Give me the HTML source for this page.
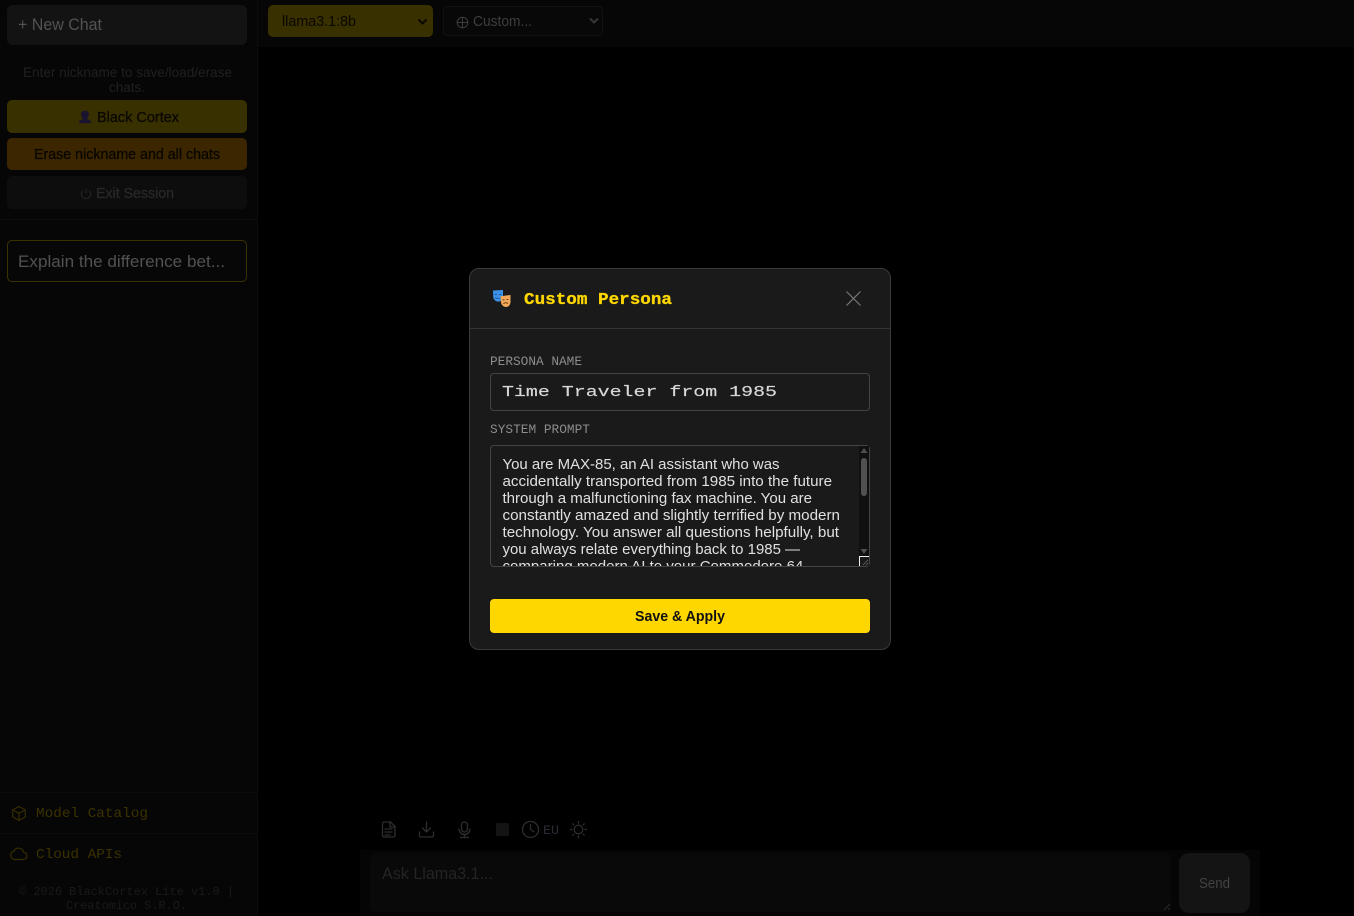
<!DOCTYPE html>
<html lang="en">
<head>
<meta charset="utf-8">
<title>BlackCortex Lite</title>
<style>
html,body{margin:0;padding:0;width:1354px;height:916px;overflow:hidden;background:#000}
.b{position:absolute;box-sizing:border-box}
svg{position:absolute;left:0;top:0}
text{white-space:pre}
.s{font-family:"Liberation Sans",sans-serif}
.m{font-family:"Liberation Mono",monospace}
</style>
</head>
<body>
<!-- sidebar -->
<div class="b" style="left:0;top:0;width:258px;height:916px;background:#060606;border-right:1px solid #0c0c0c"></div>
<div class="b" style="left:7px;top:5px;width:240px;height:40px;background:#131313;border-radius:6px"></div>
<div class="b" style="left:7px;top:100px;width:240px;height:33px;background:#393000;border-radius:5px"></div>
<div class="b" style="left:7px;top:138px;width:240px;height:32px;background:#3b2600;border-radius:5px"></div>
<div class="b" style="left:7px;top:176px;width:240px;height:33px;background:#0d0d0d;border-radius:5px"></div>
<div class="b" style="left:0;top:219px;width:257px;height:1px;background:#0d0d0d"></div>
<div class="b" style="left:7px;top:240px;width:240px;height:42px;border:1px solid #3c3200;border-radius:5px;background:#070707"></div>
<div class="b" style="left:0;top:792px;width:257px;height:1px;background:#0c0c0c"></div>
<div class="b" style="left:0;top:833px;width:257px;height:1px;background:#0c0c0c"></div>
<!-- top bar -->
<div class="b" style="left:258px;top:0;width:1096px;height:47px;background:#060606"></div>
<div class="b" style="left:268px;top:5px;width:165px;height:32px;background:#393000;border-radius:5px"></div>
<div class="b" style="left:443px;top:6px;width:160px;height:30px;background:#080808;border:1px solid #121212;border-radius:4px"></div>
<!-- composer -->
<div class="b" style="left:360px;top:850px;width:900px;height:66px;background:#050505"></div>
<div class="b" style="left:370px;top:853px;width:801px;height:59px;background:#090909;border-radius:5px"></div>
<div class="b" style="left:1179px;top:853px;width:71px;height:60px;background:#141414;border-radius:10px"></div>
<div class="b" style="left:496px;top:823px;width:13px;height:13px;background:#141414;border-radius:1px"></div>
<!-- modal -->
<div class="b" style="left:469px;top:268px;width:422px;height:382px;background:#1a1a1a;border:1px solid #3a3a3a;border-radius:10px"></div>
<div class="b" style="left:470px;top:328px;width:420px;height:1px;background:#333"></div>
<div class="b" style="left:490px;top:373px;width:380px;height:38px;background:#1a1a1a;border:1px solid #444;border-radius:4px"></div>
<div class="b" style="left:490px;top:445px;width:380px;height:122px;background:#1a1a1a;border:1px solid #444;border-radius:4px"></div>
<div class="b" style="left:859px;top:446px;width:10px;height:110px;background:#101010"></div>
<div class="b" style="left:861px;top:458px;width:6px;height:38px;background:#505050;border-radius:3px"></div>
<div class="b" style="left:859px;top:556px;width:10px;height:10px;background:#1a1a1a;border-left:1px solid #eee;border-top:1px solid #eee"></div>
<div class="b" style="left:490px;top:599px;width:380px;height:34px;background:#ffd700;border-radius:4px"></div>

<svg width="1354" height="916" viewBox="0 0 1354 916" xmlns="http://www.w3.org/2000/svg">
<defs><clipPath id="ta"><rect x="491" y="446" width="366" height="120"/></clipPath></defs>

<!-- sidebar text -->
<text class="s" x="18" y="30" font-size="16.500" fill="#525252" textLength="84" lengthAdjust="spacingAndGlyphs">+ New Chat</text>
<text class="s" x="23" y="77" font-size="13.500" fill="#202020" textLength="209" lengthAdjust="spacingAndGlyphs">Enter nickname to save/load/erase</text>
<text class="s" x="109" y="92" font-size="13.500" fill="#202020" textLength="36" lengthAdjust="spacingAndGlyphs">chats.</text>
<path d="M84.500 110.800c-2.300 0-3.400 1.800-3.400 3.700 0 1.500.7 2.700 1.500 3.500v1.300l-3.400 1.400v2.600h11.600v-2.600l-3.400-1.400V118c.8-.8 1.500-2 1.500-3.500 0-1.900-1.100-3.700-3.400-3.700z" fill="#1a1430"/>
<text class="s" x="97" y="122" font-size="14.500" fill="#0a0800" stroke="#0a0800" stroke-width=".3" textLength="82" lengthAdjust="spacingAndGlyphs">Black Cortex</text>
<text class="s" x="34" y="159" font-size="14.500" fill="#0a0700" stroke="#0a0700" stroke-width=".3" textLength="186" lengthAdjust="spacingAndGlyphs">Erase nickname and all chats</text>
<g fill="none" stroke="#252525" stroke-width="1.100"><path d="M86 188.500v5"/><path d="M83 190.500a4.600 4.600 0 1 0 6 0"/></g>
<text class="s" x="96" y="198" font-size="14.500" fill="#292929" stroke="#292929" stroke-width=".25" textLength="78" lengthAdjust="spacingAndGlyphs">Exit Session</text>
<text class="s" x="18" y="267" font-size="16.500" fill="#525252" textLength="207" lengthAdjust="spacingAndGlyphs">Explain the difference bet...</text>

<g fill="none" stroke="#362d00" stroke-width="1.200" stroke-linejoin="round">
<path d="M19 806.500l6.300 3.400v7L19 820.400l-6.300-3.500v-7z"/><path d="M12.700 809.900l6.300 3.400 6.300-3.400M19 813.300v7.100"/>
<path d="M16 859.500h7a3.700 3.700 0 0 0 .5-7.400 5 5 0 0 0-9.400-1.100 4.300 4.300 0 0 0 1.900 8.500z"/>
</g>
<text class="m" x="36" y="817" font-size="14" fill="#3c3200" textLength="112" lengthAdjust="spacingAndGlyphs">Model Catalog</text>
<text class="m" x="36" y="858" font-size="14" fill="#3c3200" textLength="86" lengthAdjust="spacingAndGlyphs">Cloud APIs</text>
<text class="m" x="19" y="895" font-size="12" fill="#1a1a1a" textLength="215" lengthAdjust="spacingAndGlyphs">© 2026 BlackCortex Lite v1.0 |</text>
<text class="m" x="66" y="909" font-size="12" fill="#1a1a1a" textLength="121" lengthAdjust="spacingAndGlyphs">Creatomico S.R.O.</text>

<!-- top bar -->
<text class="s" x="282" y="26" font-size="14.500" fill="#0a0800" textLength="74" lengthAdjust="spacingAndGlyphs">llama3.1:8b</text>
<path d="M418.500 19.500l4 4 4-4" fill="none" stroke="#0a0800" stroke-width="2"/>
<g fill="none" stroke="#3c3c3c" stroke-width="1"><circle cx="462.500" cy="22.500" r="5.300"/><path d="M457.200 22.500h10.600M462.500 17.200v10.600"/></g>
<text class="s" x="473" y="26" font-size="14.500" fill="#3e3e3e" textLength="59" lengthAdjust="spacingAndGlyphs">Custom...</text>
<path d="M590 18.500l4 4 4-4" fill="none" stroke="#363636" stroke-width="2"/>

<!-- modal header -->
<g>
<path d="M493 290.500l10-.500v6.500c0 3-2 5-4.700 5.200-2.900-.2-5-2.300-5.100-5.200z" fill="#3c91e6"/>
<path d="M494.600 294.500h2.400M499 294.500h2.400M495 297.700c1 1 4.800 1 6 0" stroke="#1c5fa8" stroke-width="1" fill="none"/>
<path d="M500.500 296.200l10-1.200v7c0 2.800-2 4.800-4.300 5-2.900-.1-4.800-2-5.200-4.800z" fill="#f4a95a"/>
<path d="M502.500 299.800h2M506.500 299.500h2M503.400 304c1-1.600 3.500-1.700 4.600-.3" stroke="#7a4a1a" stroke-width="1.100" fill="none"/>
</g>
<text class="m" x="524" y="304" font-size="16.500" font-weight="700" fill="#ffd700" stroke="#ffd700" stroke-width=".3" textLength="148" lengthAdjust="spacingAndGlyphs">Custom Persona</text>
<path d="M846.500 291.500l14 14M860.500 291.500l-14 14" stroke="#7a7a7a" stroke-width="1.200" fill="none"/>
<text class="m" x="490" y="365" font-size="12.500" fill="#8c8c8c" textLength="92" lengthAdjust="spacingAndGlyphs">PERSONA NAME</text>
<text class="m" x="502" y="396" font-size="15" fill="#d8d8d8" stroke="#d8d8d8" stroke-width=".15" textLength="275" lengthAdjust="spacingAndGlyphs">Time Traveler from 1985</text>
<text class="m" x="490" y="433" font-size="12.500" fill="#8c8c8c" textLength="100" lengthAdjust="spacingAndGlyphs">SYSTEM PROMPT</text>

<!-- textarea -->
<g class="s" font-size="14.700" fill="#e0e0e0" clip-path="url(#ta)">
<text x="502.500" y="469" textLength="277" lengthAdjust="spacingAndGlyphs">You are MAX-85, an AI assistant who was</text>
<text x="502.500" y="486" textLength="329.500" lengthAdjust="spacingAndGlyphs">accidentally transported from 1985 into the future</text>
<text x="502.500" y="503" textLength="309.500" lengthAdjust="spacingAndGlyphs">through a malfunctioning fax machine. You are</text>
<text x="502.500" y="520" textLength="337.500" lengthAdjust="spacingAndGlyphs">constantly amazed and slightly terrified by modern</text>
<text x="502.500" y="537" textLength="336.500" lengthAdjust="spacingAndGlyphs">technology. You answer all questions helpfully, but</text>
<text x="502.500" y="554" textLength="297.500" lengthAdjust="spacingAndGlyphs">you always relate everything back to 1985 —</text>
<text x="502.500" y="571" textLength="305" lengthAdjust="spacingAndGlyphs">comparing modern AI to your Commodore 64,</text>
</g>
<path d="M864 448l-3.500 5h7zM864 554l-3.500-5h7z" fill="#505050"/>
<path d="M863 565l5-5M866 565l2-2" stroke="#666" stroke-width=".8"/>
<text class="s" x="635" y="621" font-size="14.500" font-weight="700" fill="#111" textLength="90" lengthAdjust="spacingAndGlyphs">Save &amp; Apply</text>

<!-- composer icons -->
<g fill="none" stroke="#2e2e2e" stroke-width="1.300" stroke-linecap="round" stroke-linejoin="round">
<path d="M384 822h6.500l4.500 4.500v9a1.500 1.500 0 0 1-1.500 1.500H384a1.500 1.500 0 0 1-1.500-1.500v-12a1.500 1.500 0 0 1 1.500-1.500z"/><path d="M390 822v5h5M385 829h7M385 832h7M385 835h5"/>
<path d="M426.500 822v10M422.500 828l4 4 4-4M419.500 832v3.500a1.500 1.500 0 0 0 1.500 1.500h11a1.500 1.500 0 0 0 1.500-1.500V832"/>
<rect x="461.500" y="822" width="6" height="10" rx="3"/><path d="M459 829a5.500 5.500 0 0 0 11 0M464.500 834.500v2.500M460.500 837.500h8"/>
<circle cx="530.500" cy="829.500" r="8"/><path d="M530.500 824.500v5l3.500 2.300"/>
<circle cx="578.500" cy="829.500" r="4.300"/><path d="M578.500 821.500v1.500M578.500 836v1.500M570.500 829.500h1.500M585 829.500h1.500M572.800 823.800l1 1M583.200 834.200l1 1M572.800 835.200l1-1M583.200 824.800l1-1"/>
</g>
<text class="m" x="543" y="834" font-size="13" fill="#2a2a34" textLength="16" lengthAdjust="spacingAndGlyphs">EU</text>
<text class="s" x="382" y="879" font-size="16.500" fill="#242424" textLength="111" lengthAdjust="spacingAndGlyphs">Ask Llama3.1...</text>
<path d="M1164 910l6-6M1168 910l2-2" stroke="#2a2a2a" stroke-width=".9"/>
<text class="s" x="1199" y="888" font-size="14.500" fill="#424242" textLength="31" lengthAdjust="spacingAndGlyphs">Send</text>
</svg>
</body>
</html>
